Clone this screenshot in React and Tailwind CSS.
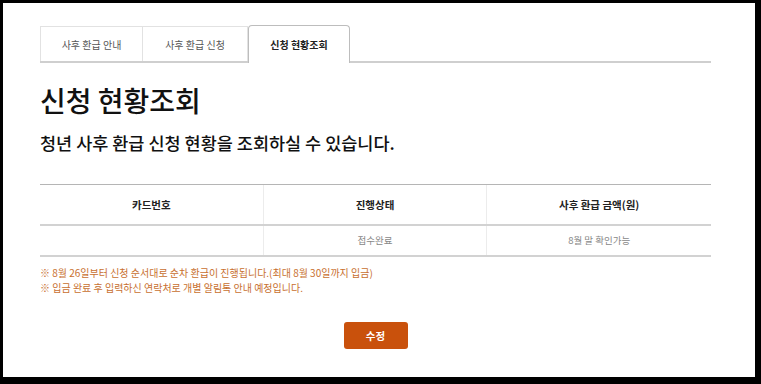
import React from "react";

const font = { fontFamily: '"Noto Sans CJK KR", "Noto Sans", sans-serif' };

export default function App() {
  return (
    <div className="w-[761px] h-[384px] bg-black pt-[3px] pl-[3px] pr-[6px] pb-[7px]" style={font}>
      <div className="bg-white w-full h-full pl-[37px] pr-[44px] pt-[22px]">
        {/* Tabs */}
        <div className="flex items-end border-b-2 border-[#cfcfcf] h-[38px]">
          <div className="w-[103px] h-[35px] border border-b-0 border-[#e2e2e2] flex items-center justify-center text-[10px] text-[#555]">
            사후 환급 안내
          </div>
          <div className="w-[105px] h-[35px] border border-b-0 border-l-0 border-[#e2e2e2] flex items-center justify-center text-[10px] text-[#555]">
            사후 환급 신청
          </div>
          <div className="w-[102px] h-[38px] -mb-[2px] border border-b-0 border-[#bdbdbd] rounded-t-[4px] bg-white flex items-center justify-center text-[10px] font-bold text-[#222]">
            신청 현황조회
          </div>
        </div>

        <h1 className="mt-[21px] text-[28px] leading-[33px] font-medium text-[#111]">신청 현황조회</h1>
        <p className="mt-[14px] text-[17.5px] leading-[24px] font-medium text-[#111]">
          청년 사후 환급 신청 현황을 조회하실 수 있습니다.
        </p>

        {/* Table */}
        <div className="mt-[29px] border-t border-[#b5b5b5]">
          <div className="grid grid-cols-3 h-[41px] border-b-2 border-[#d2d2d2]">
            <div className="flex items-center justify-center text-[10.5px] font-bold text-[#222] border-r border-[#ececec]">카드번호</div>
            <div className="flex items-center justify-center text-[10.5px] font-bold text-[#222] border-r border-[#ececec]">진행상태</div>
            <div className="flex items-center justify-center text-[10.5px] font-bold text-[#222]">사후 환급 금액(원)</div>
          </div>
          <div className="grid grid-cols-3 h-[31px] border-b-2 border-[#d2d2d2]">
            <div className="border-r border-[#ececec]"></div>
            <div className="flex items-center justify-center text-[9.5px] text-[#888] border-r border-[#ececec]">접수완료</div>
            <div className="flex items-center justify-center text-[9.5px] text-[#888]">8월 말 확인가능</div>
          </div>
        </div>

        <div className="mt-[8px] text-[10px] leading-[15px] text-[#c8702f]">
          <p>※ 8월 26일부터 신청 순서대로 순차 환급이 진행됩니다.(최대 8월 30일까지 입금)</p>
          <p>※ 입금 완료 후 입력하신 연락처로 개별 알림톡 안내 예정입니다.</p>
        </div>

        <div className="flex justify-center mt-[27px]">
          <button className="w-[64px] h-[27px] rounded-[3px] bg-[#c9510c] text-white text-[10.5px] font-bold flex items-center justify-center">
            수정
          </button>
        </div>
      </div>
    </div>
  );
}
